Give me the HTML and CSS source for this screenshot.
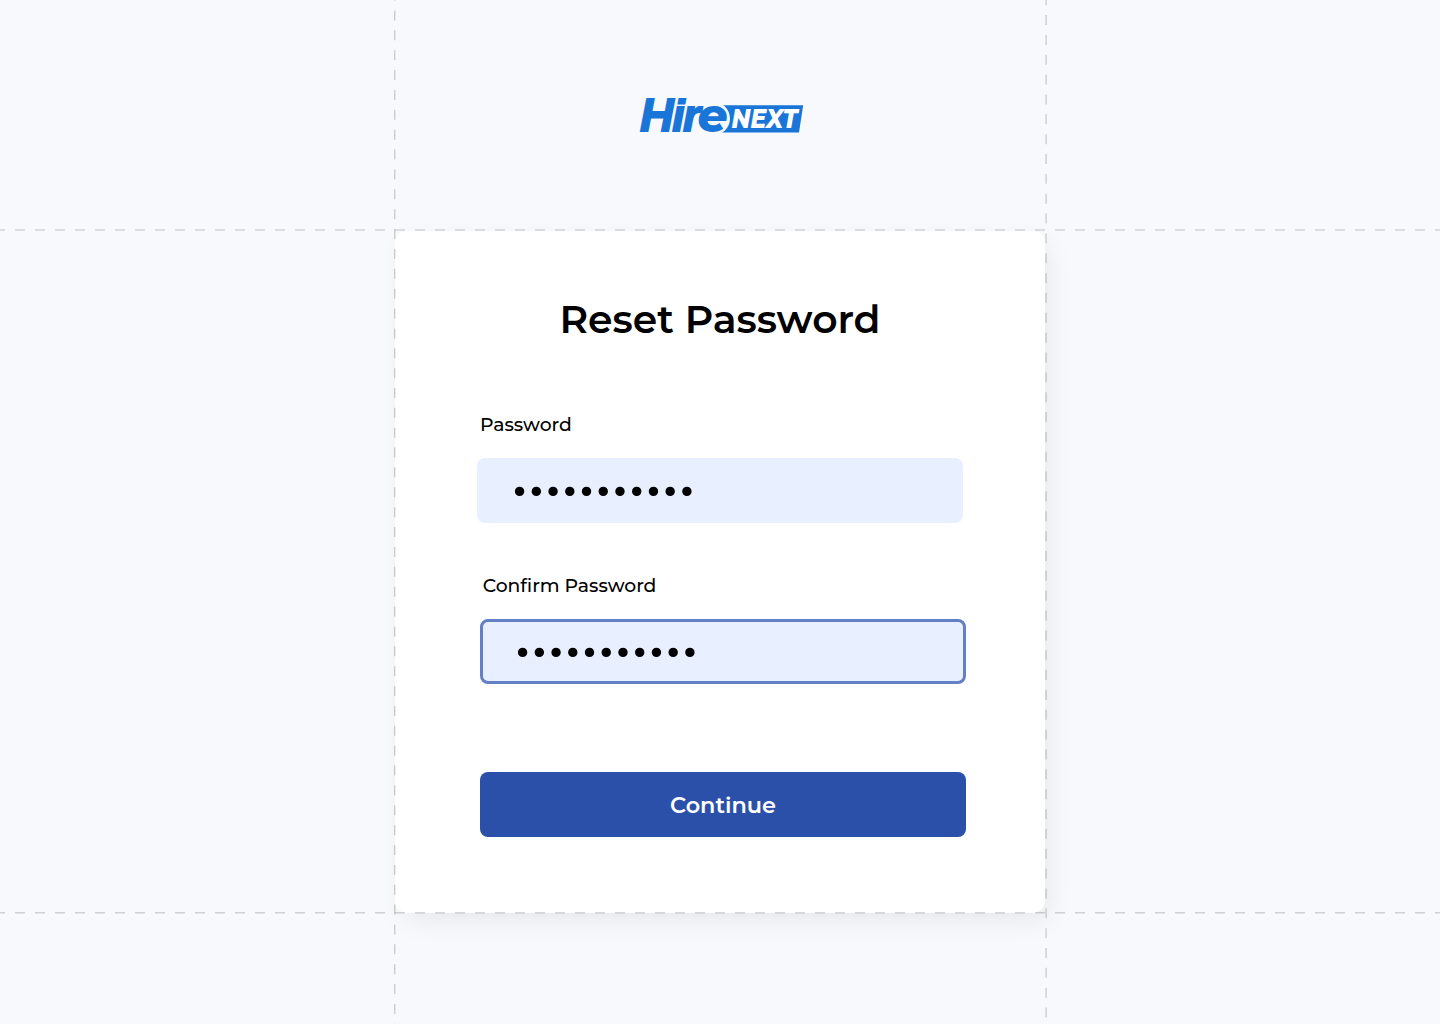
FILE: index.html
```html
<!DOCTYPE html>
<html lang="en">
<head>
<meta charset="utf-8">
<title>Reset Password</title>
<link rel="stylesheet" href="styles.css">
</head>
<body>
<main class="page">
  <svg class="logo" width="168" height="44" viewBox="638 93 168 44" role="img" aria-label="HireNEXT">
    <path class="logo-banner" d="M722 105.3H803.2L799 132.5H718Z"/>
    <ellipse class="logo-gap" cx="712.5" cy="118.5" rx="17.5" ry="17"/>
    <text class="logo-hire" y="130.6" x="640 672.3 683">H<tspan class="logo-ir">ir</tspan></text>
    <text class="logo-e" x="697.5" y="131.5">e</text>
    <text class="logo-next" x="731.5" y="128" textLength="66" lengthAdjust="spacingAndGlyphs">NEXT</text>
  </svg>
  <form class="card">
    <h1 class="title"><span>Reset Password</span></h1>
    <label class="label" for="password"><span>Password</span></label>
    <div class="field" id="password">
      <svg class="dots" width="180" height="10" viewBox="0 0 180 10"><path d="M4.6 5.4h168"/></svg>
    </div>
    <label class="label label-confirm" for="confirm"><span>Confirm Password</span></label>
    <div class="field field-focus" id="confirm">
      <svg class="dots" width="180" height="10" viewBox="0 0 180 10"><path d="M4.6 5.4h168"/></svg>
    </div>
    <button class="submit" type="button">Continue</button>
  </form>
  <svg class="guides" width="1440" height="1024" viewBox="0 0 1440 1024" aria-hidden="true">
    <path class="guide-top" d="M-5 230H1440"/>
    <path class="guide-bottom" d="M-5 912.7H1440"/>
    <path class="guide-left" d="M394.7 -9.4V1024"/>
    <path class="guide-right" d="M1046.1 -4.8V1024"/>
  </svg>
</main>
</body>
</html>
```
FILE: styles.css
```css
* { box-sizing: border-box; }
body { margin: 0; background: #f7f9fd; font-family: Montserrat, Inter, sans-serif; color: #000; }
.page { position: relative; height: 1024px; padding-top: 93px; overflow: hidden; }
.logo { display: block; margin-left: 638px; overflow: visible; }
.logo-banner { fill: #1976d8; }
.logo-gap { fill: #f7f9fd; }
.logo-hire { fill: #1976d8; stroke: #1976d8; stroke-width: 1.8; font: italic 700 46.5px "Liberation Sans", sans-serif; }
.logo-ir { font-size: 44.5px; }
.logo-e { fill: #1976d8; font: italic 800 47px Montserrat, Inter, sans-serif; }
.logo-next { fill: #fff; font: italic 800 26.5px Montserrat, Inter, sans-serif; }
.card {
  display: flex; flex-direction: column;
  width: 650px; height: 682px; margin: 94px 0 0 395px; padding: 63px 79px 0 82px;
  background: #fff; border-radius: 12px;
  box-shadow: 6px 10px 28px -4px rgba(0, 0, 0, .08);
}
.title { margin: 0 0 0 82.4px; font-size: 39.3px; line-height: 50px; font-weight: 600; white-space: nowrap; }
.label { margin: 68px 0 0 3px; font-size: 18.75px; line-height: 26px; font-weight: 500; }
.label-confirm { margin: 50px 0 0 5.7px; }
.field {
  display: flex; align-items: center; width: 486px; height: 65px; margin-top: 20px; padding-left: 37.6px;
  background: #e8efff; border-radius: 8px;
}
.field-focus { width: 486px; margin: 20px 0 0 3px; padding-left: 34.6px; border: 3px solid #6380c7; }
.dots { margin-top: 1px; fill: none; stroke: #000; stroke-width: 9.4; stroke-linecap: round; stroke-dasharray: 0 16.73; overflow: visible; }
.submit {
  width: 486px; height: 65px; flex: none; margin: 88px 0 0 3px; padding: 1px 0 0; border: 0; border-radius: 8px;
  background: #2b50a9; color: #fff; font: 600 22.4px/64px Montserrat, Inter, sans-serif;
}
.guides { position: absolute; inset: 0; pointer-events: none; fill: none; stroke: #000; }
.guide-top { stroke-width: 2; stroke-dasharray: 10 10; stroke-opacity: .11; }
.guide-bottom { stroke-width: 1.5; stroke-dasharray: 10 10; stroke-opacity: .16; }
.guide-left { stroke-width: 1.4; stroke-dasharray: 10 9.87; stroke-opacity: .18; }
.guide-right { stroke-width: 1.7; stroke-dasharray: 10 9.85; stroke-opacity: .14; }
```
